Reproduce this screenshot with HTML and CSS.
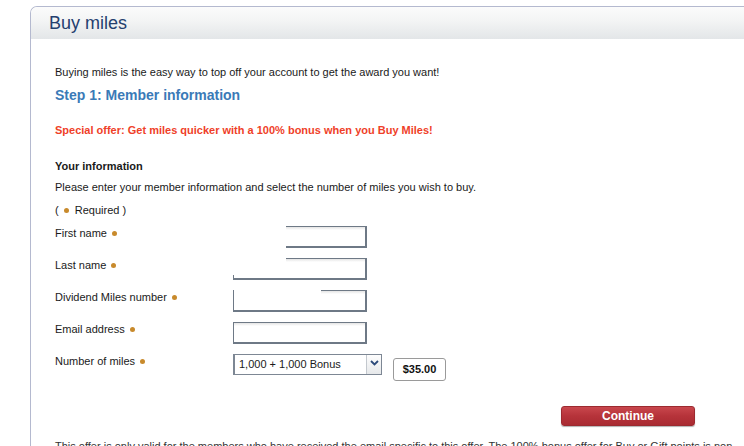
FILE: index.html
```html
<!DOCTYPE html>
<html>
<head>
<meta charset="utf-8">
<link rel="stylesheet" href="styles.css">
</head>
<body>
<div class="panel">
  <div class="panel-head"><h1>Buy miles</h1></div>
  <div class="panel-body">
    <p class="intro">Buying miles is the easy way to top off your account to get the award you want!</p>
    <h2 class="step">Step 1: Member information</h2>
    <p class="offer">Special offer: Get miles quicker with a 100% bonus when you Buy Miles!</p>
    <h3 class="sub">Your information</h3>
    <p class="text">Please enter your member information and select the number of miles you wish to buy.</p>
    <p class="text req">( <span class="dot"></span> Required )</p>
    <div class="form">
      <div class="row">
        <label class="lbl">First name <span class="dot"></span></label>
        <div class="field f-first"><input type="text"></div>
      </div>
      <div class="row">
        <label class="lbl">Last name <span class="dot"></span></label>
        <div class="field f-last"><input type="text"></div>
      </div>
      <div class="row">
        <label class="lbl">Dividend Miles number <span class="dot"></span></label>
        <div class="field f-div"><input type="text"></div>
      </div>
      <div class="row">
        <label class="lbl">Email address <span class="dot"></span></label>
        <div class="field f-full"><input type="text"></div>
      </div>
      <div class="row">
        <label class="lbl">Number of miles <span class="dot"></span></label>
        <div class="select">
          <span class="select-val">1,000 + 1,000 Bonus</span>
          <span class="select-btn"><svg width="9" height="6" viewBox="0 0 9 6"><path d="M1 1 L4.5 4.5 L8 1" fill="none" stroke="#2c4a7a" stroke-width="1.8"/></svg></span>
        </div>
        <div class="price">$35.00</div>
      </div>
    </div>
    <div class="actions"><button class="continue">Continue</button></div>
    <p class="fine">This offer is only valid for the members who have received the email specific to this offer. The 100% bonus offer for Buy or Gift points is non-</p>
  </div>
</div>
</body>
</html>
```
FILE: styles.css
```css
html, body {
  margin: 0;
  padding: 0;
  background: #fff;
  font-family: "Liberation Sans", Arial, Helvetica, sans-serif;
  color: #1a1a1a;
  overflow: hidden;
}
.panel {
  margin: 6px 0 0 30px;
  border-top: 1px solid #b4b9cf;
  border-left: 1px solid #b4b9cf;
  border-top-left-radius: 7px;
  height: 460px;
}
.panel-head {
  height: 32px;
  background: linear-gradient(#fbfbfb, #f4f5f5 40%, #e3e6e8);
  border-top-left-radius: 6px;
  padding-left: 18px;
  display: flex;
  align-items: center;
}
.panel-head h1 {
  margin: 0;
  font-size: 18px;
  font-weight: normal;
  color: #24406f;
  padding-top: 1px;
}
.panel-body {
  padding: 26px 0 0 24px;
}
p, h2, h3 { margin: 0; }
.intro, .text, .sub, .offer, .lbl {
  font-size: 11px;
  line-height: 14px;
}
.step {
  margin-top: 7px;
  font-size: 14px;
  line-height: 18px;
  color: #3a7ab7;
  font-weight: bold;
}
.offer {
  margin-top: 19px;
  color: #ef3f29;
  font-weight: bold;
}
.sub {
  margin-top: 22px;
  font-weight: bold;
}
.text { margin-top: 7px; }
.req { margin-top: 9px; }
.dot {
  display: inline-block;
  width: 5px;
  height: 5px;
  border-radius: 50%;
  background: #c88a2c;
  vertical-align: 1px;
  margin: 0 3px 0 2px;
}
.form {
  margin-top: 9px;
  display: flex;
  flex-direction: column;
  gap: 10px;
}
.row {
  display: flex;
  align-items: flex-start;
  height: 22px;
}
.lbl { width: 178px; flex: none; }
.field {
  width: 134px;
  height: 22px;
  box-sizing: border-box;
  border-color: #6e7986;
  border-style: solid;
  border-width: 1px 2px 2px 1px;
  position: relative;
  background: linear-gradient(#e4e4e4, #fff 3px);
}
.field input {
  width: 100%;
  height: 100%;
  box-sizing: border-box;
  border: 0;
  background: transparent;
  padding: 2px 4px;
  font: 11px "Liberation Sans", Arial, sans-serif;
  outline: none;
}
.f-first {
  margin-left: 53px;
  width: 81px;
  border-left-width: 0;
}
.f-last {
  border-left-width: 0;
  border-top-width: 0;
  background:
    linear-gradient(#6e7986, #6e7986) 53px 0 / 100% 1px no-repeat,
    linear-gradient(#e4e4e4, #fff 3px) 53px 1px / 100% 100% no-repeat,
    linear-gradient(#6e7986, #6e7986) 0 100% / 1px 3px no-repeat;
}
.f-div {
  border-top-width: 0;
  background:
    linear-gradient(#6e7986, #6e7986) 87px 0 / 100% 1px no-repeat,
    linear-gradient(#e4e4e4, #fff 3px) 87px 1px / 100% 100% no-repeat;
}
.select {
  width: 149px;
  height: 21px;
  box-sizing: border-box;
  border: 1px solid #7d8794;
  border-width: 1px 1px 1px 2px;
  display: flex;
  background: #fff;
}
.select-val {
  flex: 1;
  font-size: 11px;
  line-height: 18px;
  padding-left: 4px;
}
.select-btn {
  width: 15px;
  border-left: 1px solid #c3c8ce;
  background: linear-gradient(#fdfdfd, #e6e8ea);
  display: flex;
  align-items: flex-start;
  justify-content: center;
  padding-top: 5px;
  box-sizing: border-box;
}
.price {
  margin: 4px 0 0 11px;
  width: 53px;
  height: 23px;
  box-sizing: border-box;
  border: 1px solid #9a9a9a;
  border-radius: 3px;
  font-size: 11px;
  font-weight: bold;
  line-height: 21px;
  text-align: center;
  color: #111;
}
.actions {
  margin-top: 30px;
  padding-left: 506px;
}
.continue {
  width: 134px;
  height: 20px;
  border: 1px solid #9c2a30;
  border-radius: 3px;
  background: linear-gradient(#c9474d, #b6333a 50%, #a92b32);
  color: #fff;
  font: bold 12px "Liberation Sans", Arial, sans-serif;
  padding: 0;
  box-shadow: 0 1px 1px rgba(0,0,0,0.3);
}
.fine {
  margin-top: 13px;
  font-size: 11px;
  line-height: 14px;
  color: #333;
  white-space: nowrap;
}
```
